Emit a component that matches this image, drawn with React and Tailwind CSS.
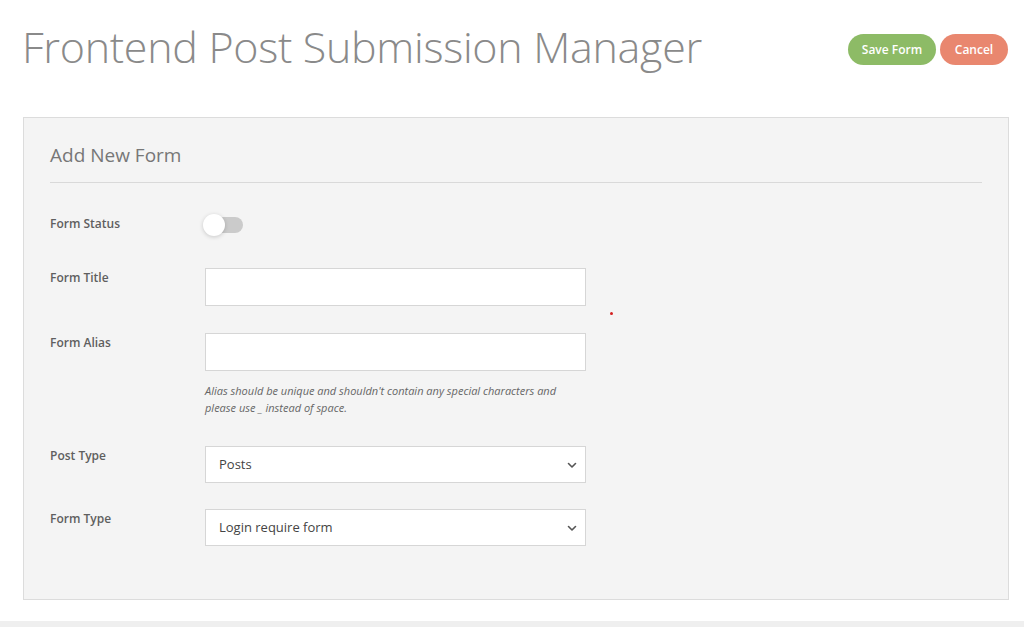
import React from 'react';

const font = { fontFamily: '"Open Sans", "Noto Sans", sans-serif' };

const Chevron = () => (
  <svg width="12" height="12" viewBox="0 0 12 12" fill="none">
    <path d="M2.5 4.5 L6 8 L9.5 4.5" stroke="#555" strokeWidth="1.6" strokeLinecap="round" strokeLinejoin="round" />
  </svg>
);

const Row = ({ label, children, className }) => (
  <div className={`flex items-start ${className}`}>
    <div className="w-[155px] shrink-0 pt-[1px] text-[12px] leading-[18px] font-semibold text-[#5f5f5f]">{label}</div>
    <div>{children}</div>
  </div>
);

const TextInput = () => (
  <div className="w-[381px] h-[38px] bg-white border border-[#d6d6d6]" />
);

const Select = ({ value }) => (
  <div className="w-[381px] h-[37px] bg-white border border-[#d6d6d6] flex items-center justify-between pl-[13px] pr-[7px]">
    <span className="text-[13px] text-[#444]">{value}</span>
    <Chevron />
  </div>
);

export default function App() {
  return (
    <div className="w-[1024px] h-[627px] bg-white overflow-hidden flex flex-col" style={font}>
      <div className="h-[117px] flex items-start justify-between pl-[22px] pr-[16px]">
        <h1 className="mt-[17px] text-[43px] leading-[60px] font-light text-[#8a8a8a] tracking-[-0.3px]">
          Frontend Post Submission Manager
        </h1>
        <div className="mt-[34px] flex gap-[4px]">
          <button className="w-[88px] h-[31px] rounded-full bg-[#8dbb66] text-white text-[12px] font-semibold">Save Form</button>
          <button className="w-[68px] h-[31px] rounded-full bg-[#e9876f] text-white text-[12px] font-semibold">Cancel</button>
        </div>
      </div>

      <div className="relative mx-[23px] w-[986px] h-[483px] bg-[#f4f4f4] border border-[#dcdcdc] px-[26px]">
        <div className="pt-[24px] pb-[13px] border-b border-[#d9d9d9] text-[19px] leading-[27px] text-[#777]">
          Add New Form
        </div>

        <Row label="Form Status" className="mt-[31px] items-center">
          <div className="relative w-[40px] h-[22px] -ml-[2px]">
            <div className="absolute right-0 top-[3px] w-[28px] h-[16px] rounded-full bg-[#cbcbcb]" />
            <div className="absolute left-0 top-0 w-[22px] h-[22px] rounded-full bg-white shadow-[0_1px_4px_rgba(0,0,0,0.18)]" />
          </div>
        </Row>

        <Row label="Form Title" className="mt-[32px]">
          <TextInput />
        </Row>

        <Row label="Form Alias" className="mt-[27px]">
          <TextInput />
          <p className="mt-[11px] w-[370px] text-[11px] leading-[17px] italic text-[#666]">
            Alias should be unique and shouldn't contain any special characters and please use _ instead of space.
          </p>
        </Row>

        <Row label="Post Type" className="mt-[30px]">
          <Select value="Posts" />
        </Row>

        <Row label="Form Type" className="mt-[26px]">
          <Select value="Login require form" />
        </Row>

        <div className="absolute left-[586px] top-[194px] w-[3px] h-[3px] rounded-full bg-[#d42020]" />
      </div>

      <div className="mt-auto h-[6px] bg-[#efefef]" />
    </div>
  );
}
